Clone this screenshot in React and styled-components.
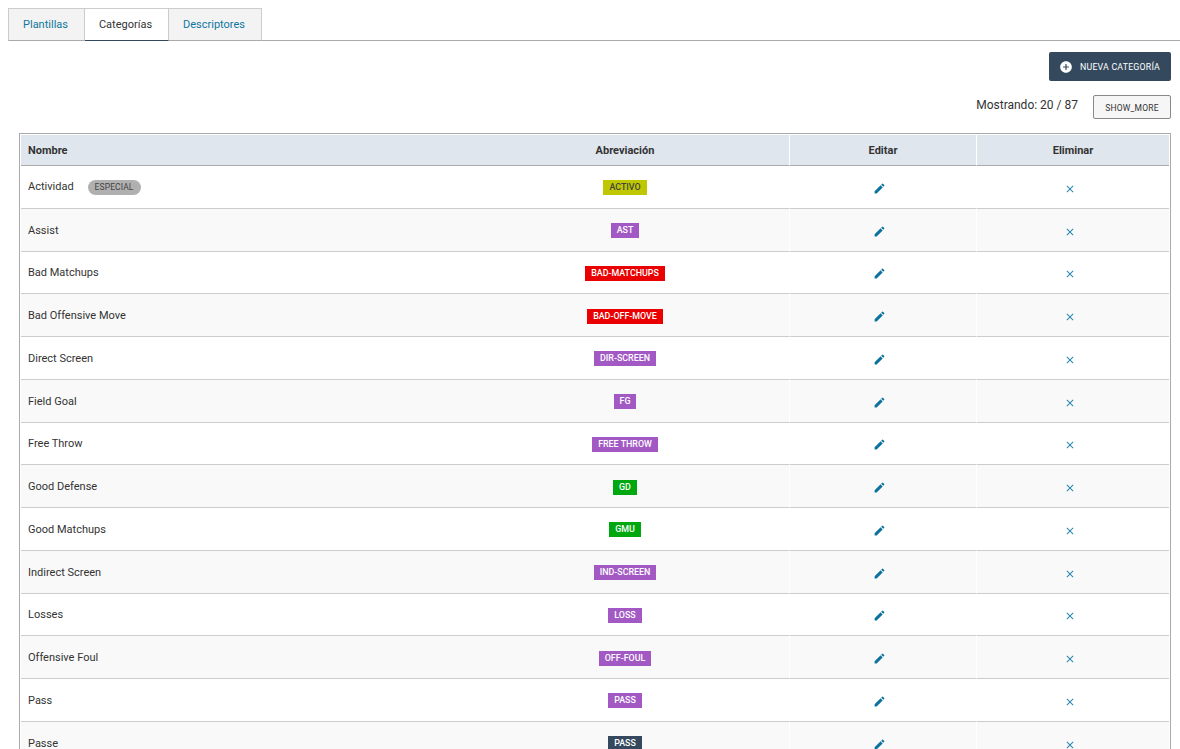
import styled, { createGlobalStyle } from "styled-components"
import { MdAddCircle, MdClose, MdEdit } from "react-icons/md"

const GlobalStyle = createGlobalStyle`
    html, body {
        margin: 0;
        padding: 0;
        height: 100%;
        overflow: hidden;
        background: #fff;
        font-family: Roboto, "Liberation Sans", sans-serif;
        color: #333;
    }
`

const Page = styled.div`
    height: 749px;
    overflow: hidden;
    padding: 8px 0 0 8px;
    box-sizing: border-box;
`
const Tabs = styled.div`
    display: flex;
    height: 33px;
    box-sizing: border-box;
    border-bottom: 1px solid #aaa;
`
const Tab = styled.div`
    display: flex;
    align-items: center;
    justify-content: center;
    width: ${props => props.$width}px;
    height: 33px;
    padding-right: 2px;
    box-sizing: border-box;
    font-size: 11px;
    border: 1px solid #ccc;
    border-left-width: ${props => (props.$first ? 1 : 0)}px;
    border-bottom: 1px solid ${props => (props.$active ? "#34495e" : "#aaa")};
    background: ${props => (props.$active ? "#fff" : "#f3f3f3")};
    color: ${props => (props.$active ? "#333" : "#0f76a0")};
`
const Content = styled.div`
    padding: 11px 9px 0 11px;
`
const Actions = styled.div`
    display: flex;
    justify-content: flex-end;
`
const PrimaryButton = styled.button`
    display: flex;
    align-items: center;
    gap: 7px;
    width: 122px;
    height: 29px;
    padding: 0 0 0 10px;
    border: none;
    border-radius: 2px;
    background: #34495e;
    color: #fff;
    font-family: inherit;
    font-size: 8.8px;
    font-weight: 400;
    letter-spacing: 0.2px;
    white-space: nowrap;
`
const Counter = styled.div`
    display: flex;
    justify-content: flex-end;
    align-items: center;
    gap: 15px;
    height: 24px;
    margin: 14px 0;
    font-size: 12px;
    color: #333;
`
const CounterText = styled.span`
    position: relative;
    top: -2px;
`
const SecondaryButton = styled.button`
    width: 78px;
    height: 24px;
    padding: 1px 0 0;
    border: 1px solid #888;
    border-radius: 2px;
    background: #f6f6f6;
    color: #333;
    font-family: inherit;
    font-size: 8.5px;
    letter-spacing: 0.2px;
`
const TableBox = styled.div`
    border: 1px solid #aaa;
    padding: 1px 1px 0;
`
const Table = styled.table`
    width: 100%;
    table-layout: fixed;
    border-collapse: separate;
    border-spacing: 0;
    font-size: 11px;
`
const HeadCell = styled.th`
    height: 31px;
    padding: 0 ${props => (props.$left ? 7 : 0)}px;
    box-sizing: border-box;
    width: ${props => props.$width || "auto"};
    background: #e0e6ee;
    border-bottom: 1px solid #aaa;
    border-left: ${props => (props.$divider ? "1px solid #fff" : "0")};
    text-align: ${props => (props.$left ? "left" : "center")};
    font-size: 11px;
    font-weight: 700;
    color: #333;
`
const Row = styled.tr`
    height: 42.75px;
    background: ${props => (props.$even ? "#f9f9f9" : "#fff")};
`
const Cell = styled.td`
    padding: 0 ${props => (props.$left ? 7 : 0)}px;
    box-sizing: border-box;
    border-bottom: 1px solid #ccc;
    border-left: ${props => (props.$divider ? "1px solid #fff" : "0")};
    text-align: ${props => (props.$left ? "left" : "center")};
    color: #333;
`
const NameCell = styled.div`
    display: flex;
    align-items: center;
    gap: 14px;
    position: relative;
    top: 0.5px;
`
const NameText = styled.span`
    position: relative;
    top: ${props => (props.$special ? -1 : 0)}px;
`
const SpecialBadge = styled.span`
    display: inline-block;
    position: relative;
    top: 0.5px;
    height: 15px;
    line-height: 15px;
    padding: 0 7px;
    border-radius: 8px;
    background: #b0b0b0;
    color: #444;
    font-size: 8.5px;
    letter-spacing: 0.1px;
`
const Tag = styled.span`
    display: inline-block;
    position: relative;
    top: 1px;
    height: 15px;
    line-height: 15px;
    padding: 0 6px;
    background: ${props => props.$color};
    color: ${props => (props.$dark ? "#444" : "#fff")};
    font-size: 8.9px;
    font-weight: 500;
`
const IconLink = styled.span`
    display: inline-flex;
    position: relative;
    top: ${props => props.$top}px;
    margin-right: ${props => props.$gap}px;
    color: ${props => props.$color};
`

const purple = "#a259c4"
const red = "#ea0000"
const green = "#00a80f"

const rows = [
    { name: "Actividad", special: true, tag: "ACTIVO", color: "#bfc700", dark: true },
    { name: "Assist", tag: "AST", color: purple },
    { name: "Bad Matchups", tag: "BAD-MATCHUPS", color: red },
    { name: "Bad Offensive Move", tag: "BAD-OFF-MOVE", color: red },
    { name: "Direct Screen", tag: "DIR-SCREEN", color: purple },
    { name: "Field Goal", tag: "FG", color: purple },
    { name: "Free Throw", tag: "FREE THROW", color: purple },
    { name: "Good Defense", tag: "GD", color: green },
    { name: "Good Matchups", tag: "GMU", color: green },
    { name: "Indirect Screen", tag: "IND-SCREEN", color: purple },
    { name: "Losses", tag: "LOSS", color: purple },
    { name: "Offensive Foul", tag: "OFF-FOUL", color: purple },
    { name: "Pass", tag: "PASS", color: purple },
    { name: "Passe", tag: "PASS", color: "#34495e" },
]

const App = () => {
    return (
        <Page>
            <GlobalStyle />
            <Tabs>
                <Tab $first $width={77}>Plantillas</Tab>
                <Tab $active $width={84}>Categorías</Tab>
                <Tab $width={93}>Descriptores</Tab>
            </Tabs>
            <Content>
                <Actions>
                    <PrimaryButton>
                        <MdAddCircle size={14} />
                        NUEVA CATEGORÍA
                    </PrimaryButton>
                </Actions>
                <Counter>
                    <CounterText>Mostrando: 20 / 87</CounterText>
                    <SecondaryButton>SHOW_MORE</SecondaryButton>
                </Counter>
                <TableBox>
                    <Table>
                        <thead>
                            <tr>
                                <HeadCell $left $width="440px">Nombre</HeadCell>
                                <HeadCell $width="328px">Abreviación</HeadCell>
                                <HeadCell $divider $width="187px">Editar</HeadCell>
                                <HeadCell $divider>Eliminar</HeadCell>
                            </tr>
                        </thead>
                        <tbody>
                            {rows.map((row, i) => (
                                <Row key={row.name} $even={i % 2 === 1}>
                                    <Cell $left>
                                        <NameCell>
                                            <NameText $special={row.special}>{row.name}</NameText>
                                            {row.special && <SpecialBadge>ESPECIAL</SpecialBadge>}
                                        </NameCell>
                                    </Cell>
                                    <Cell>
                                        <Tag $color={row.color} $dark={row.dark}>{row.tag}</Tag>
                                    </Cell>
                                    <Cell $divider>
                                        <IconLink $color="#0b729f" $top={3} $gap={8}><MdEdit size={13} /></IconLink>
                                    </Cell>
                                    <Cell $divider>
                                        <IconLink $color="#2a86ad" $top={3.5} $gap={6}><MdClose size={12} /></IconLink>
                                    </Cell>
                                </Row>
                            ))}
                        </tbody>
                    </Table>
                </TableBox>
            </Content>
        </Page>
    )
}

export default App
